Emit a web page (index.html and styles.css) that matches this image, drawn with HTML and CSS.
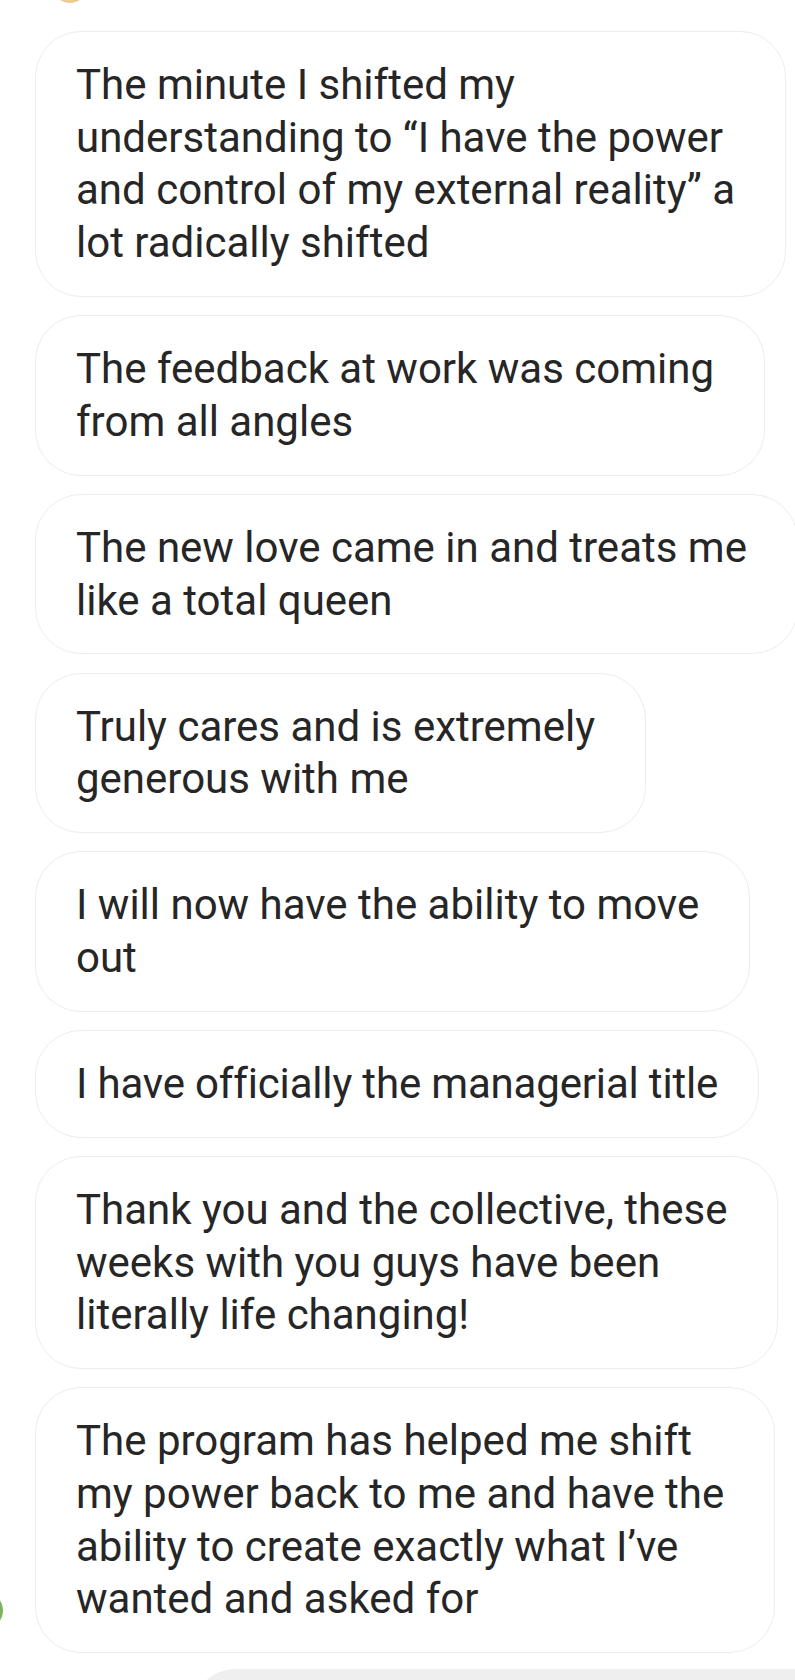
FILE: index.html
```html
<!DOCTYPE html>
<html lang="en">
<head>
<meta charset="utf-8">
<title>Messages</title>
<link rel="stylesheet" href="styles.css">
</head>
<body>
<div class="thread">
  <span class="avatar avatar-top"></span>
  <span class="avatar avatar-bottom"></span>
  <div class="bubble">The minute I shifted my<br>understanding to “I have the power<br>and control of my external reality” a<br>lot radically shifted</div>
  <div class="bubble">The feedback at work was coming<br>from all angles</div>
  <div class="bubble">The new love came in and treats me<br>like a total queen</div>
  <div class="bubble">Truly cares and is extremely<br>generous with me</div>
  <div class="bubble">I will now have the ability to move<br>out</div>
  <div class="bubble condensed">I have officially the managerial title</div>
  <div class="bubble">Thank you and the collective, these<br>weeks with you guys have been<br>literally life changing!</div>
  <div class="bubble">The program has helped me shift<br>my power back to me and have the<br>ability to create exactly what I’ve<br>wanted and asked for</div>
  <div class="bubble sent"></div>
</div>
</body>
</html>
```

FILE: styles.css
```css
html, body {
  margin: 0;
  padding: 0;
  background: #ffffff;
}

body {
  width: 795px;
  height: 1680px;
  overflow: hidden;
  font-family: Roboto, "Noto Sans", "Liberation Sans", sans-serif;
}

.thread {
  position: relative;
  display: flex;
  flex-direction: column;
  align-items: flex-start;
  gap: 18.3px;
  padding: 31px 0 0 35px;
}

.bubble {
  box-sizing: border-box;
  border: 1px solid #ececec;
  border-radius: 46px;
  padding: 27px 50px 26px 40px;
  font-size: 42px;
  line-height: 52.7px;
  color: #262626;
  white-space: nowrap;
  background: #ffffff;
}

.bubble.condensed {
  padding-right: 40px;
  letter-spacing: -0.17px;
}

.bubble.sent {
  margin-top: -2px;
  margin-left: 155px;
  width: 700px;
  height: 110px;
  background: #efefef;
  border-color: #efefef;
}

.avatar {
  position: absolute;
  border-radius: 50%;
}

.avatar-top {
  left: 52px;
  top: -36px;
  width: 36px;
  height: 39px;
  background: radial-gradient(circle at 50% 80%, #f3d9a6, #d8a24f 70%);
}

.avatar-bottom {
  left: -34px;
  top: 1592px;
  width: 37px;
  height: 37px;
  background: #7fb35a;
}
```
